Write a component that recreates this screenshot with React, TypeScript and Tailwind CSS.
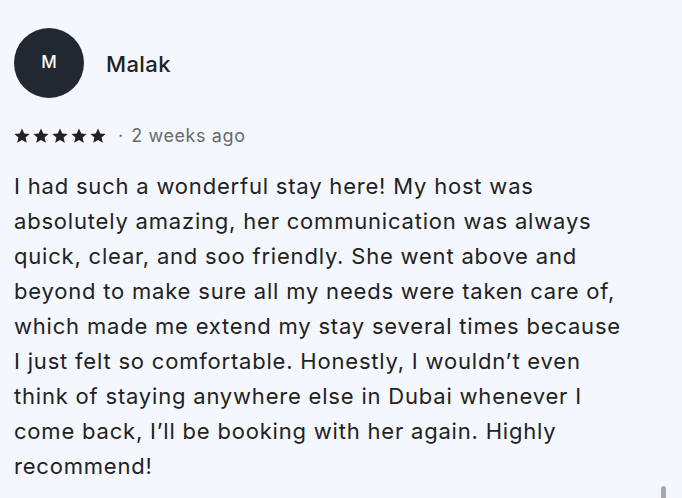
const lines = [
  "I had such a wonderful stay here! My host was",
  "absolutely amazing, her communication was always",
  "quick, clear, and soo friendly. She went above and",
  "beyond to make sure all my needs were taken care of,",
  "which made me extend my stay several times because",
  "I just felt so comfortable. Honestly, I wouldn\u2019t even",
  "think of staying anywhere else in Dubai whenever I",
  "come back, I\u2019ll be booking with her again. Highly",
  "recommend!",
];

function Star() {
  return (
    <svg viewBox="0 0 24 24" className="h-[16px] w-[16px] fill-[#222222]">
      <path d="M12 .8l3.4 7.3 8 .8-6 5.4 1.8 7.9L12 18.1l-7.2 4.1 1.8-7.9-6-5.4 8-.8z" />
    </svg>
  );
}

export default function App() {
  return (
    <div
      className="relative h-[498px] w-[682px] overflow-hidden bg-[#f4f7fd] px-[14px] pt-[28px] text-[#222222]"
      style={{ fontFamily: "Inter, 'Noto Sans', sans-serif" }}
    >
      <div className="flex items-center gap-[22px]">
        <div className="flex h-[70px] w-[70px] items-center justify-center rounded-full bg-[#222831] text-[17px] font-medium text-white">
          M
        </div>
        <div className="mt-[2px] text-[22px] font-medium tracking-[0.4px] text-[#222222]">Malak</div>
      </div>

      <div className="mt-[24px] flex items-center">
        <div className="flex gap-[3px]">
          <Star />
          <Star />
          <Star />
          <Star />
          <Star />
        </div>
        <span className="ml-[12px] text-[18px] text-[#6a6a6a]">·</span>
        <span className="ml-[8px] text-[18px] tracking-[0.6px] text-[#6a6a6a]">2 weeks ago</span>
      </div>

      <div className="mt-[20px] text-[22px] leading-[35px] tracking-[0.8px] text-[#222222]">
        {lines.map((l) => (
          <div key={l} className="whitespace-nowrap">
            {l}
          </div>
        ))}
      </div>

      <div className="absolute bottom-0 left-[661px] h-[12px] w-[5px] rounded-t-full bg-[#a8a8a8]" />
    </div>
  );
}
